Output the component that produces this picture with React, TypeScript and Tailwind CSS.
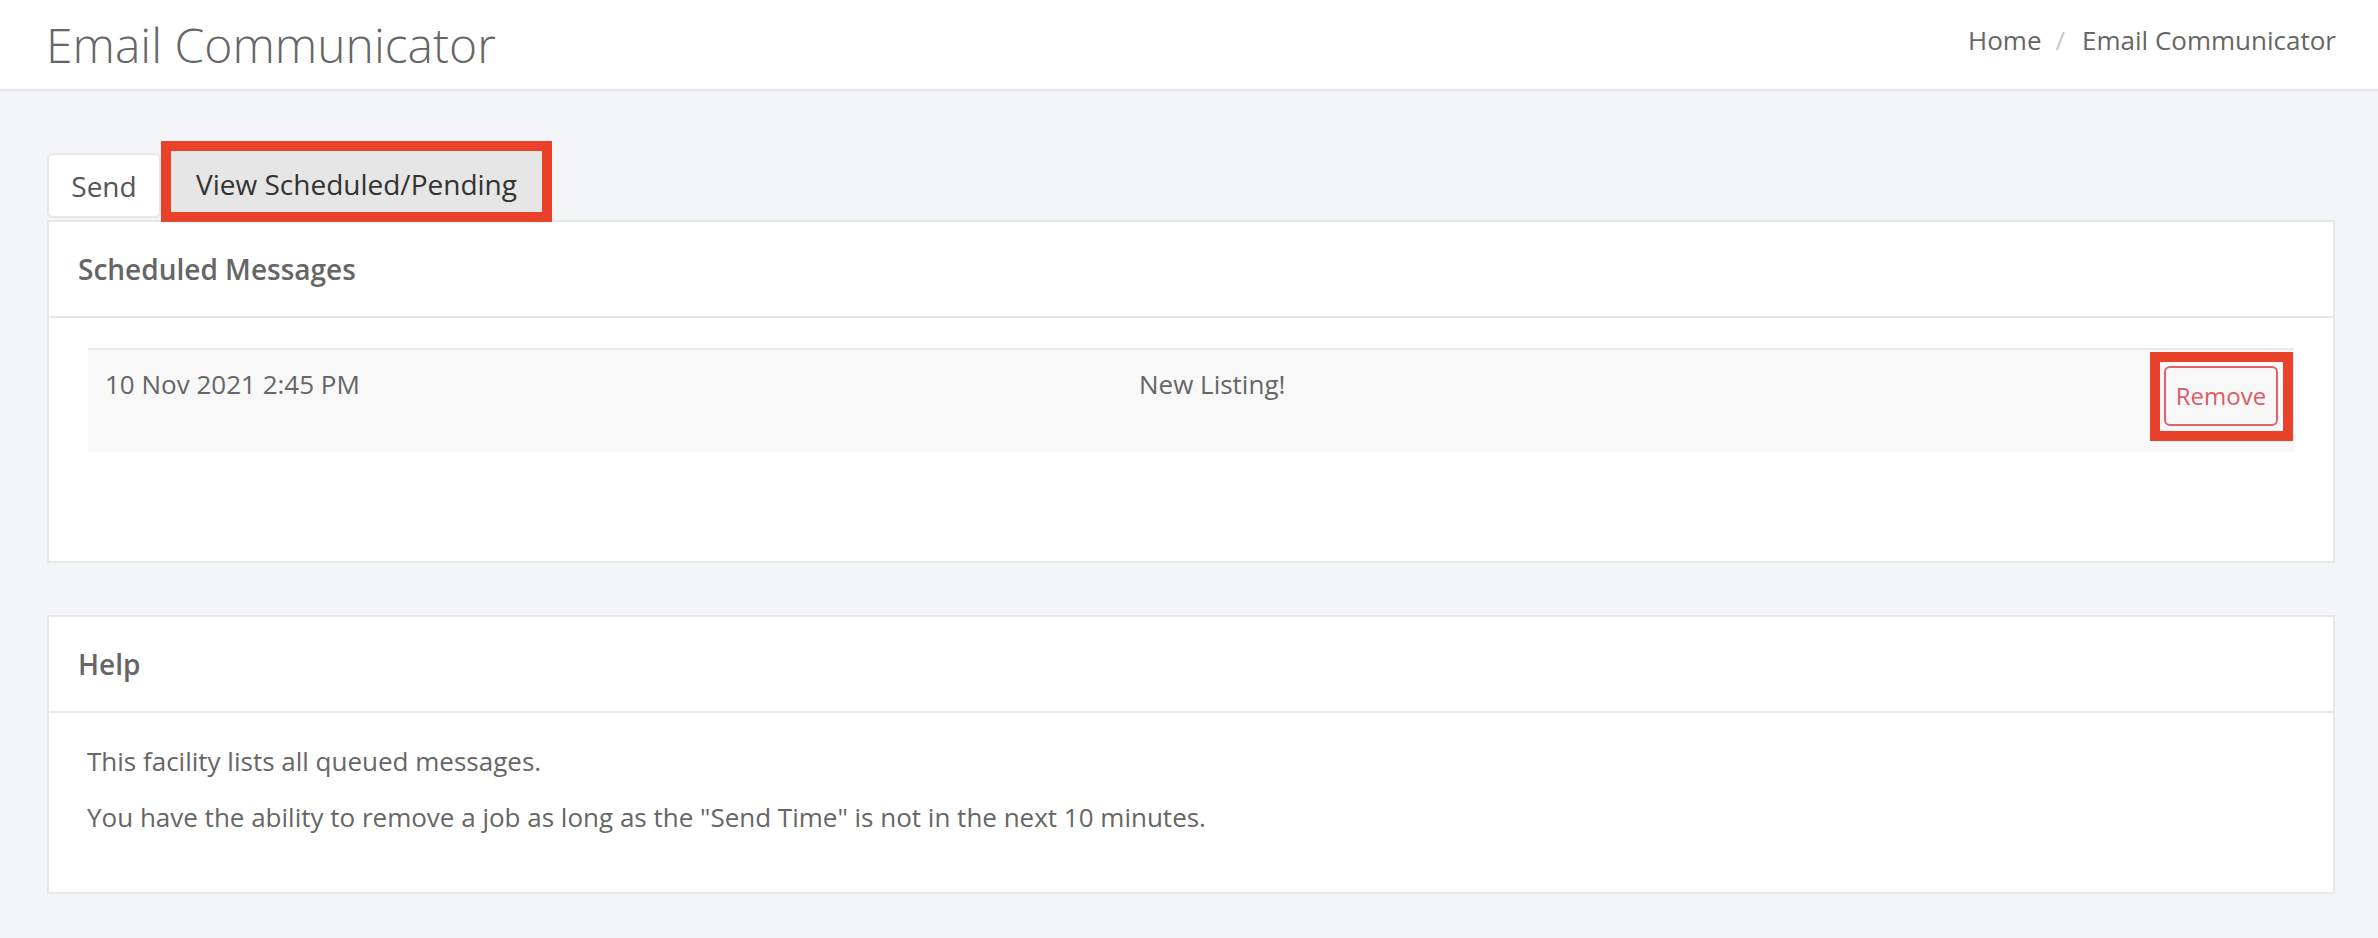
import React from 'react';

const Panel: React.FC<{ title: string; bodyClass: string; children: React.ReactNode }> = ({ title, bodyClass, children }) => (
  <section className="bg-white border-2 border-[#e8e8e8]">
    <div className="h-[96px] border-b-2 border-[#e8e8e8] flex items-center pl-[29px] text-[28px] font-semibold text-[#666]">
      {title}
    </div>
    <div className={bodyClass}>{children}</div>
  </section>
);

const App: React.FC = () => {
  return (
    <div className="min-h-screen bg-[#f4f5f9] font-['Open_Sans',sans-serif] text-[#666]">
      <header className="h-[91px] bg-white border-b-2 border-[#e6e7eb] flex items-center justify-between pl-[46px] pr-[42px]">
        <h1 className="text-[48px] font-light leading-none text-[#666]">Email Communicator</h1>
        <nav className="flex items-center text-[26px] leading-none mb-[9px]">
          <span>Home</span>
          <span className="text-[#c8c8c8] ml-[14px] mr-[17px]">/</span>
          <span>Email Communicator</span>
        </nav>
      </header>

      <main className="pl-[47px] pr-[43px] pt-[50px]">
        {/* tabs */}
        <div className="flex items-start">
          <div className="mt-[12px] h-[65px] w-[114px] bg-white border-2 border-[#e8e8e8] rounded-[6px] flex items-center justify-center text-[28px] text-[#555]">
            Send
          </div>
          <div className="h-[81px] w-[391px] border-[10px] border-[#e9412a] mb-[-2px] relative z-10">
            <div className="h-full bg-[#e6e6e6] flex items-center justify-center pt-[5px] text-[28px] text-[#333]">
              View Scheduled/Pending
            </div>
          </div>
        </div>

        <Panel title="Scheduled Messages" bodyClass="h-[243px] pt-[30px] px-[39px]">
          <div className="h-[104px] border-t-2 border-[#e8e8e8] bg-[#f8f8f8] flex items-start pl-[17px] pr-[1px] text-[26px] leading-[1.5]">
            <div className="w-[1034px] shrink-0 pt-[15px]">10 Nov 2021 2:45 PM</div>
            <div className="flex-1 pt-[15px]">New Listing!</div>
            <div className="mt-[2px] border-[10px] border-[#e9412a] p-[4px] pr-[5px] pb-[5px]">
              <button className="h-[60px] w-[114px] border-2 border-[#df636d] rounded-[6px] text-[24px] text-[#dc5c66] flex items-center justify-center">
                Remove
              </button>
            </div>
          </div>
        </Panel>

        <div className="mt-[52px]">
          <Panel title="Help" bodyClass="h-[179px] pt-[29px] pl-[38px] text-[26px] leading-[1.5]">
            <p className="mb-[17px]">This facility lists all queued messages.</p>
            <p>You have the ability to remove a job as long as the "Send Time" is not in the next 10 minutes.</p>
          </Panel>
        </div>
      </main>
    </div>
  );
};

export default App;
